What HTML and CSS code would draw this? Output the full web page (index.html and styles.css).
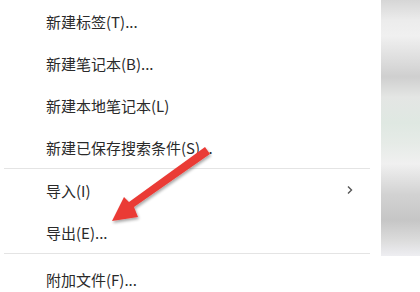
FILE: index.html
```html
<!DOCTYPE html>
<html lang="zh-CN">
<head>
<meta charset="utf-8">
<link rel="stylesheet" href="styles.css">
</head>
<body>
<div class="page">
  <ul class="menu">
    <li class="item">新建标签(T)...</li>
    <li class="item">新建笔记本(B)...</li>
    <li class="item">新建本地笔记本(L)</li>
    <li class="item">新建已保存搜索条件(S)...</li>
    <li class="sep"></li>
    <li class="item has-sub">导入(I)
      <svg class="chev" width="8" height="10" viewBox="0 0 8 10"><path d="M2 1.5 L5.5 5 L2 8.5" fill="none" stroke="#555" stroke-width="1.4"/></svg>
    </li>
    <li class="item">导出(E)...</li>
    <li class="sep"></li>
    <li class="item last">附加文件(F)...</li>
  </ul>
  <div class="strip"></div>
  <svg class="arrow" width="420" height="292" viewBox="0 0 420 292">
    <defs>
      <filter id="sh" x="-20%" y="-20%" width="140%" height="140%">
        <feGaussianBlur in="SourceAlpha" stdDeviation="1.6"/>
        <feOffset dx="1" dy="2"/>
        <feComponentTransfer><feFuncA type="linear" slope="0.35"/></feComponentTransfer>
        <feMerge><feMergeNode/><feMergeNode in="SourceGraphic"/></feMerge>
      </filter>
    </defs>
    <g filter="url(#sh)">
      <path d="M205 147 L210 154 L134 207 L138 217 L112 221 L124 197 L129 202 Z" fill="#ea3b36"/>
    </g>
  </svg>
</div>
</body>
</html>
```
FILE: styles.css
```css
html, body {
  margin: 0;
  padding: 0;
  background: #ffffff;
}
.page {
  position: relative;
  width: 420px;
  height: 292px;
  overflow: hidden;
  display: flex;
  align-items: flex-start;
}
.menu {
  list-style: none;
  margin: 0;
  padding: 0 0 0 4px;
  width: 366px;
  font-family: "Noto Sans CJK SC", "Noto Sans", sans-serif;
  font-size: 15px;
  color: #2a2a2a;
}
.item {
  height: 42px;
  display: flex;
  align-items: center;
  padding-left: 42px;
  justify-content: space-between;
  padding-right: 16px;
}
.item.last {
  padding-top: 4px;
}
.sep {
  height: 1px;
  background: #e4e4e4;
}
.chev {
  display: block;
}
.strip {
  margin-left: 11px;
  width: 39px;
  height: 256px;
  background: linear-gradient(180deg,
    #d6d6d6 0%, #ececec 8%, #f0f0f0 14%, #dcdcdc 24%, #cfcfcf 30%,
    #e4e6e4 38%, #dfe8e2 48%, #e6ebe7 56%, #f0f0f0 64%,
    #d2d2d2 76%, #c6c6c6 86%, #dcdcdc 94%, #eeeef2 100%);
}
.arrow {
  position: absolute;
  left: 0;
  top: 0;
}
```
